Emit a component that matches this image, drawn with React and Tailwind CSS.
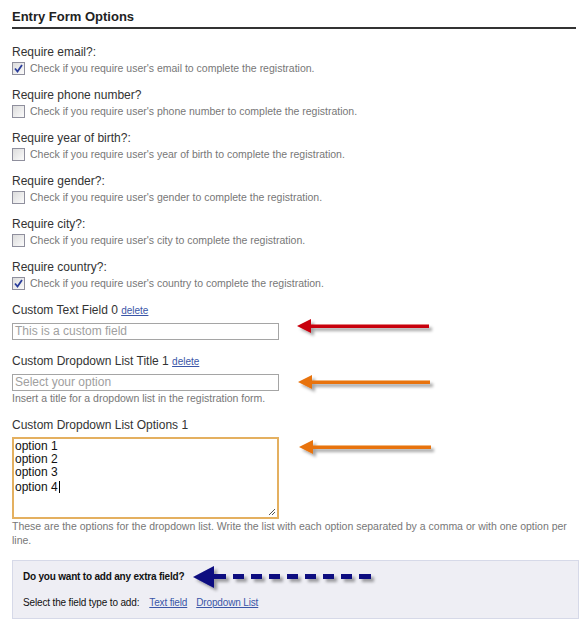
import React from "react";

const fields = [
  { label: "Require email?:", what: "email", checked: true },
  { label: "Require phone number?", what: "phone number", checked: false },
  { label: "Require year of birth?:", what: "year of birth", checked: false },
  { label: "Require gender?:", what: "gender", checked: false },
  { label: "Require city?:", what: "city", checked: false },
  { label: "Require country?:", what: "country", checked: true },
];

const Box = ({ checked }) => (
  <span className="inline-flex h-[13px] w-[13px] shrink-0 items-center justify-center border border-[#8f8f9d] bg-gradient-to-br from-[#dcdcdc] to-[#fbfbfb]">
    {checked && (
      <svg width="9" height="9" viewBox="0 0 9 9">
        <path d="M1 4.5 L3.5 7.5 L8 1" fill="none" stroke="#2a3d9b" strokeWidth="1.8" />
      </svg>
    )}
  </span>
);

const Arrow = ({ color, className }) => (
  <svg className={"absolute " + className} width="150" height="24" viewBox="0 0 150 24">
    <defs>
      <filter id={"sh" + color.slice(1)} x="-10%" y="-50%" width="130%" height="200%">
        <feDropShadow dx="3" dy="3" stdDeviation="1.5" floodColor="#000" floodOpacity="0.35" />
      </filter>
    </defs>
    <g filter={"url(#sh" + color.slice(1) + ")"}>
      <path d="M2 10 L16 3 L16 17 Z" fill={color} />
      <rect x="14" y="8.5" width="120" height="3.5" fill={color} />
    </g>
  </svg>
);

export default function App() {
  const label = "text-[12px] text-[#333] font-['Liberation_Sans',sans-serif]";
  const help = "text-[10.5px] text-[#777] font-['Liberation_Sans',sans-serif]";
  return (
    <div className="relative min-h-[625px] w-[588px] bg-white px-3 pt-[8px] font-['Liberation_Sans',sans-serif]">
      <h2 className="border-b-2 border-[#333] pb-[2px] text-[13px] font-bold leading-[17px] text-[#222]">Entry Form Options</h2>

      <div className="mt-[16px] flex flex-col gap-[13px]">
        {fields.map((f, i) => (
          <div key={"fld_" + i}>
            <div className={label + " leading-[15px]"}>{f.label}</div>
            <div className="mt-[1px] flex items-center gap-[5px]">
              <Box checked={f.checked} />
              <span className={help + " leading-[14px]"}>
                Check if you require user's {f.what} to complete the registration.
              </span>
            </div>
          </div>
        ))}
      </div>

      <div className="mt-[13px]">
        <div className={label + " leading-[15px]"}>
          Custom Text Field 0{" "}
          <a href="#" className="text-[10px] text-[#3a56a8] underline">delete</a>
        </div>
        <div className="mt-[5px] h-[17px] w-[267px] border border-[#a5a5a5] px-[2px] text-[12px] leading-[15px] text-[#a0a0a0]">
          This is a custom field
        </div>
      </div>

      <div className="mt-[14px]">
        <div className={label + " leading-[15px]"}>
          Custom Dropdown List Title 1{" "}
          <a href="#" className="text-[10px] text-[#3a56a8] underline">delete</a>
        </div>
        <div className="mt-[5px] h-[17px] w-[267px] border border-[#a5a5a5] px-[2px] text-[12px] leading-[15px] text-[#a0a0a0]">
          Select your option
        </div>
        <div className={help + " leading-[14px] text-[#666]"}>
          Insert a title for a dropdown list in the registration form.
        </div>
      </div>

      <div className="mt-[13px]">
        <div className={label + " leading-[15px]"}>Custom Dropdown List Options 1</div>
        <div className="relative mt-[4px] h-[82px] w-[267px] border-2 border-[#e4b060] px-[1px] pt-[1px] text-[12px] leading-[13px] text-[#111]">
          <div>option 1</div>
          <div>option 2</div>
          <div>option 3</div>
          <div>option 4<span className="ml-[1px] inline-block h-[12px] w-px translate-y-[2px] bg-black" /></div>
          <svg className="absolute bottom-[1px] right-[1px]" width="8" height="8" viewBox="0 0 8 8">
            <path d="M7 1 L1 7 M7 4 L4 7" stroke="#555" strokeWidth="1" />
          </svg>
        </div>
        <div className={help + " w-[566px] leading-[14px] text-[#666]"}>
          These are the options for the dropdown list. Write the list with each option separated by a comma or with one option per line.
        </div>
      </div>

      <div className="mt-[13px] w-[567px] border border-[#d6d9e8] bg-[#eeeef4] px-[10px] pb-[8px] pt-[8px] text-[10px] text-[#111]">
        <div className="font-bold leading-[16px] tracking-[-0.2px]">Do you want to add any extra field?</div>
        <div className="mt-[11px] flex gap-[9px] leading-[14px] tracking-[-0.15px]">
          <span>Select the field type to add:</span>
          <a href="#" className="ml-[1px] text-[#3a56a8] underline">Text field</a>
          <a href="#" className="text-[#3a56a8] underline">Dropdown List</a>
        </div>
      </div>

      <Arrow color="#c8000a" className="left-[295px] top-[316px]" />
      <Arrow color="#e8730a" className="left-[296px] top-[372px]" />
      <Arrow color="#e8730a" className="left-[297px] top-[437px]" />

      <svg className="absolute left-[190px] top-[563px]" width="200" height="30" viewBox="0 0 200 30">
        <defs>
          <filter id="shblue" x="-10%" y="-50%" width="130%" height="200%">
            <feDropShadow dx="3" dy="3" stdDeviation="1.5" floodColor="#000" floodOpacity="0.35" />
          </filter>
        </defs>
        <g filter="url(#shblue)" fill="#0a0a80">
          <path d="M3 14 L24 3 L24 25 Z" />
          <rect x="24" y="11" width="12" height="5" />
          <rect x="43" y="11" width="11" height="5" />
          <rect x="61" y="11" width="11" height="5" />
          <rect x="79" y="11" width="11" height="5" />
          <rect x="97" y="11" width="11" height="5" />
          <rect x="115" y="11" width="11" height="5" />
          <rect x="133" y="11" width="11" height="5" />
          <rect x="151" y="11" width="11" height="5" />
          <rect x="169" y="11" width="12" height="5" />
        </g>
      </svg>
    </div>
  );
}
